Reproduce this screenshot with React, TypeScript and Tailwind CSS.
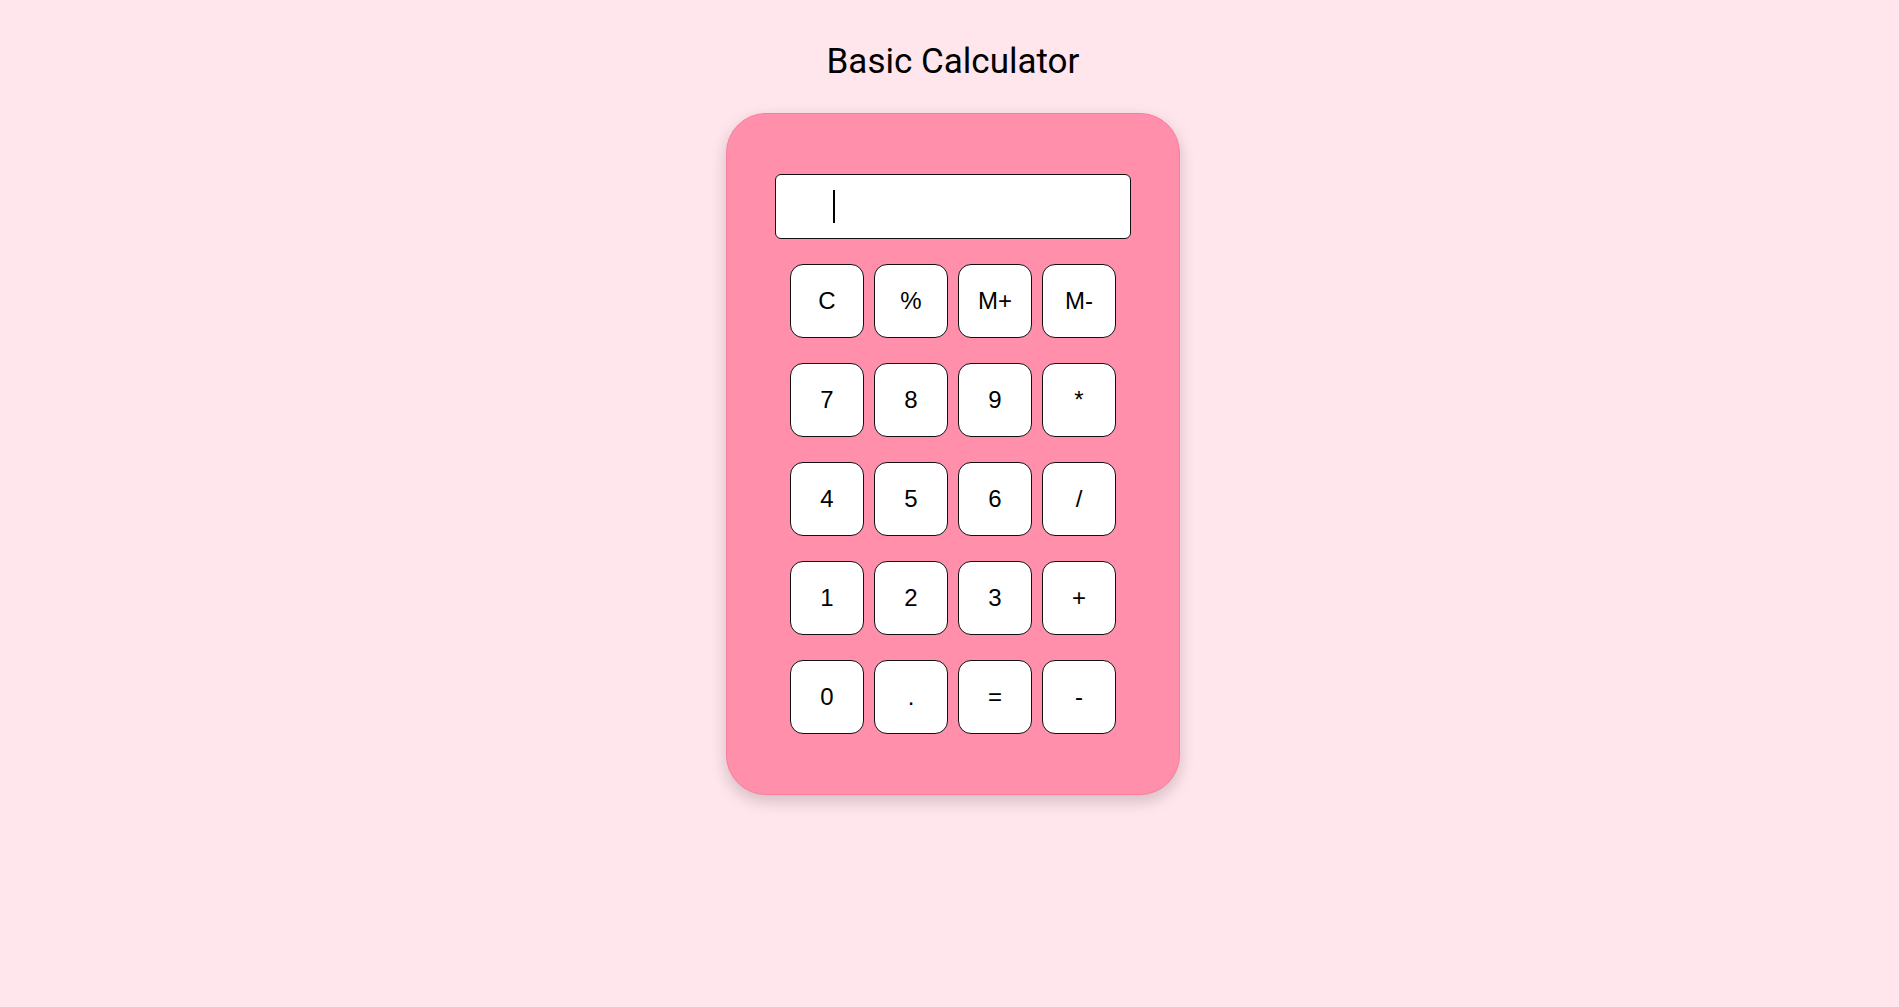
import React from "react";

const keys = ["C", "%", "M+", "M-", "7", "8", "9", "*", "4", "5", "6", "/", "1", "2", "3", "+", "0", ".", "=", "-"];

export default function App() {
  return (
    <div className="min-h-[1007px] w-full bg-[#ffe5ec] flex flex-col items-center pl-[7px]">
      <h1 className="mt-[41px] text-[35px] leading-[41px] font-normal text-black" style={{ fontFamily: "Roboto, sans-serif" }}>
        Basic Calculator
      </h1>
      <div className="mt-[31px] w-[454px] rounded-[40px] border border-[#fb7c9c] bg-[#ff8fab] pt-[60px] pb-[60px] flex flex-col items-center shadow-[0_6px_16px_rgba(0,0,0,0.18)]">
        <div className="relative w-[356px] h-[65px]">
          <input
            type="text"
            readOnly
            className="w-full h-full rounded-[6px] border border-[#111] bg-white outline-none caret-transparent pl-[58px] text-[28px]"
            style={{ fontFamily: "'Liberation Sans', Arial, sans-serif" }}
          />
          <div className="absolute left-[58px] top-[16px] w-[1.5px] h-[33px] bg-black" />
        </div>
        <div className="mt-[25px] grid grid-cols-[repeat(4,74px)] gap-x-[10px] gap-y-[25px]">
          {keys.map((k) => (
            <button
              key={k}
              className="w-[74px] h-[74px] rounded-[13px] border border-[#111] bg-white text-[24px] text-black flex items-center justify-center"
              style={{ fontFamily: "'Liberation Sans', Arial, sans-serif" }}
            >
              {k}
            </button>
          ))}
        </div>
      </div>
    </div>
  );
}
